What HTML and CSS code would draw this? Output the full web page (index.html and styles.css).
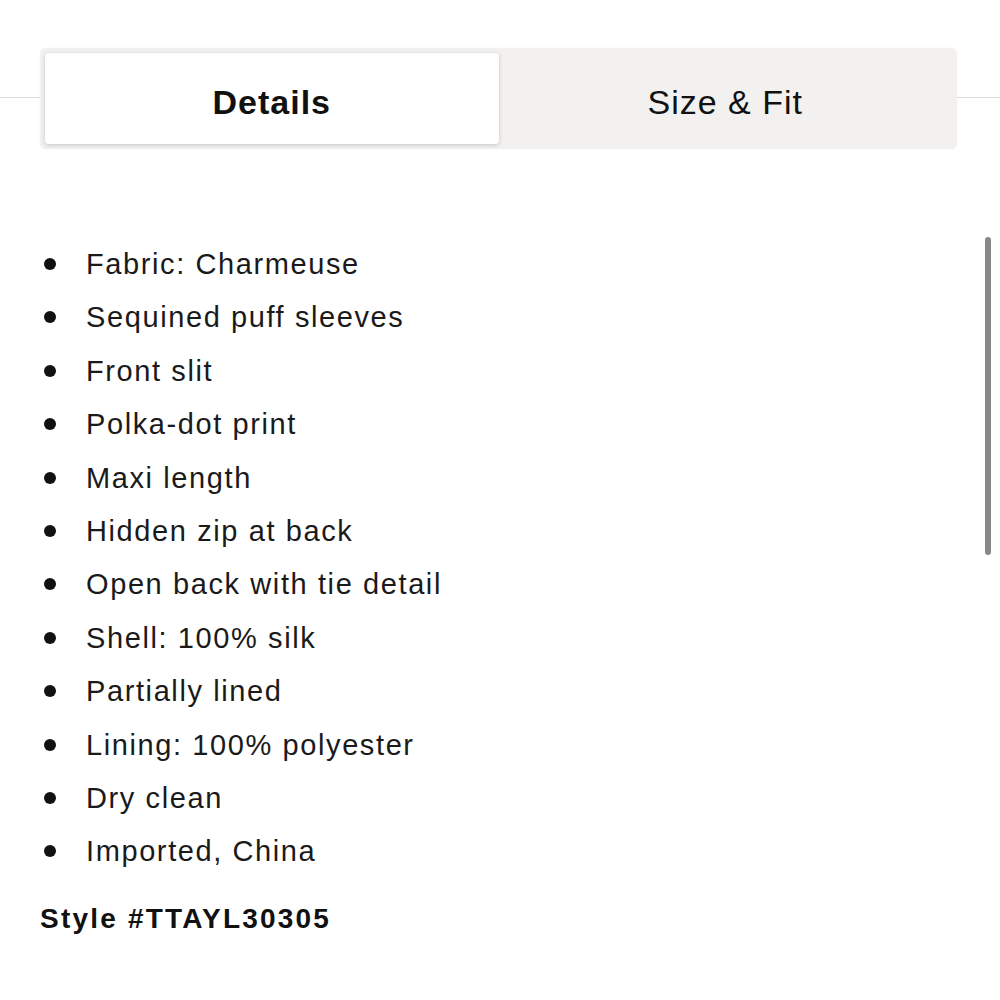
FILE: index.html
```html
<!DOCTYPE html>
<html lang="en">
<head>
    <meta charset="UTF-8">
    <meta name="viewport" content="width=device-width, initial-scale=1.0">
    <title>Product Details</title>
    <link rel="stylesheet" href="styles.css">
</head>
<body>
    <div class="tabs-row">
        <div class="tabs">
            <button class="tab active">Details</button>
            <button class="tab">Size &amp; Fit</button>
        </div>
    </div>

    <div class="panel">
        <ul class="details">
            <li>Fabric: Charmeuse</li>
            <li>Sequined puff sleeves</li>
            <li>Front slit</li>
            <li>Polka-dot print</li>
            <li>Maxi length</li>
            <li>Hidden zip at back</li>
            <li>Open back with tie detail</li>
            <li>Shell: 100% silk</li>
            <li>Partially lined</li>
            <li>Lining: 100% polyester</li>
            <li>Dry clean</li>
            <li>Imported, China</li>
        </ul>
        <p class="style-no">Style #TTAYL30305</p>
    </div>

    <div class="scrollbar"></div>
</body>
</html>
```

FILE: styles.css
```css
body {
    margin: 0;
    background: #fff;
    color: #111;
    font-family: "Liberation Sans", Arial, sans-serif;
}
.tabs-row {
    position: relative;
    padding: 48px 43px 0 40px;
}
.tabs-row::before {
    content: "";
    position: absolute;
    left: 0;
    right: 0;
    top: 97px;
    height: 1px;
    background: #dcdcdc;
}
.tabs {
    position: relative;
    display: flex;
    padding: 5px;
    height: 91px;
    background: #f2f1f0;
    border-radius: 6px;
    box-shadow: 0 0 2px rgba(0, 0, 0, 0.06);
}
.tab {
    flex: 1;
    border: none;
    background: transparent;
    font-family: inherit;
    font-size: 34px;
    letter-spacing: 1px;
    color: #111;
    border-radius: 4px;
    padding: 7px 0 0 0;
}
.tab.active {
    background: #fff;
    font-weight: bold;
    box-shadow: 0 1px 4px rgba(0, 0, 0, 0.18);
}
.panel {
    padding: 88px 40px 0 40px;
}
.details {
    list-style: none;
    margin: 0;
    padding: 0;
}
.details li {
    position: relative;
    height: 53.4px;
    line-height: 54px;
    padding-left: 46px;
    font-size: 29px;
    letter-spacing: 1.6px;
    color: #1a1a1a;
}
.details li::before {
    content: "";
    position: absolute;
    left: 4px;
    top: 21px;
    width: 12px;
    height: 12px;
    border-radius: 50%;
    background: #111;
}
.style-no {
    margin: 21px 0 0 0;
    font-size: 28px;
    font-weight: bold;
    letter-spacing: 2.2px;
    line-height: 40px;
}
.scrollbar {
    position: absolute;
    left: 985px;
    top: 237px;
    width: 6px;
    height: 318px;
    border-radius: 3px;
    background: #888;
}
```
